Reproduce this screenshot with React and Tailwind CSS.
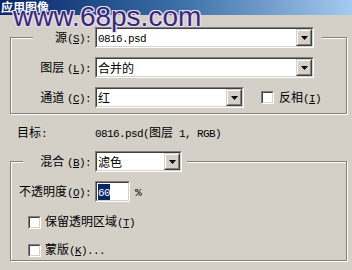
import React from 'react';

// latin text in the old bitmap-dialog look: 6px per char
const M = ({ children }) => (
  <span className="font-['Liberation_Mono',monospace] text-[11px] tracking-[-0.6px]">{children}</span>
);

const Sunken = ({ className = '', children }) => (
  <div className={`border border-t-[#808080] border-l-[#808080] border-b-white border-r-white ${className}`}>
    <div className="w-full h-full bg-white border border-t-[#404040] border-l-[#404040] border-b-[#d4d0c8] border-r-[#d4d0c8] flex items-center">
      {children}
    </div>
  </div>
);

const Arrow = () => (
  <div className="w-[16px] h-full shrink-0 bg-[#d4d0c8] border border-t-[#d4d0c8] border-l-[#d4d0c8] border-b-[#404040] border-r-[#404040]">
    <div className="w-full h-full border border-t-white border-l-white border-b-[#808080] border-r-[#808080] flex items-center justify-center">
      <svg width="7" height="4" viewBox="0 0 7 4"><path d="M0 0h7L3.5 4z" fill="#000" /></svg>
    </div>
  </div>
);

const Select = ({ width, children }) => (
  <Sunken className={`${width} h-[21px] shrink-0`}>
    <div className="flex-1 pl-[1px] leading-[15px] whitespace-nowrap overflow-hidden">{children}</div>
    <Arrow />
  </Sunken>
);

const Check = () => <Sunken className="w-[13px] h-[13px] shrink-0" />;

const Group = ({ className = '', children }) => (
  <div className={`ml-[10px] w-[337px] border border-[#808080] shadow-[inset_1px_1px_0_#fff,1px_1px_0_#fff] flex flex-col ${className}`}>
    {children}
  </div>
);

const Label = ({ width = 'w-[84px]', children }) => (
  <div className={`${width} shrink-0 text-right pr-[4px] leading-[15px] whitespace-nowrap`}>{children}</div>
);

export default function App() {
  return (
    <div className="relative w-[352px] h-[270px] overflow-hidden bg-[#d4d0c8] text-black text-[12px] font-['Noto_Sans_CJK_SC',sans-serif]">
      {/* title bar */}
      <div className="h-[15px] bg-gradient-to-r from-[#0a246a] via-[#3a6ea5] to-[#a6caf0] text-white font-bold leading-[13px] pl-[1px]">
        应用图像
      </div>

      {/* watermark */}
      <div className="absolute left-[13px] top-[3px] z-10 font-['Liberation_Sans',sans-serif] text-[28px] leading-[28px] text-[#3b2a70] [text-shadow:1px_0_0_#e4def4,-1px_0_0_#e4def4,0_1px_0_#e4def4,0_-1px_0_#e4def4,1px_1px_0_#e4def4,-1px_-1px_0_#e4def4,1px_-1px_0_#e4def4,-1px_1px_0_#e4def4]">
        www.68ps.com
      </div>

      {/* source group */}
      <Group className="mt-[22px] h-[77px]">
        <div className="-mt-[11px] ml-[22px] w-[289px] pr-[8px] bg-[#d4d0c8] flex items-center">
          <Label width="w-[62px]">源<M>(<u>S</u>):</M></Label>
          <Select width="w-[219px]"><M>0816.psd</M></Select>
        </div>
        <div className="mt-[9px] flex items-center">
          <Label>图层 <M>(<u>L</u>):</M></Label>
          <Select width="w-[219px]">合并的</Select>
        </div>
        <div className="mt-[9px] flex items-center">
          <Label>通道 <M>(<u>C</u>):</M></Label>
          <Select width="w-[149px]">红</Select>
          <div className="ml-[17px] flex items-center gap-[5px]">
            <Check />
            <span className="leading-[15px]">反相<M>(<u>I</u>)</M></span>
          </div>
        </div>
      </Group>

      {/* target */}
      <div className="mt-[12px] h-[14px] flex items-center pl-[17px] leading-[14px]">
        <div className="w-[78px] shrink-0">目标<M>:</M></div>
        <div className="whitespace-nowrap"><M>0816.psd(</M>图层<M> 1, RGB)</M></div>
      </div>

      {/* blend group */}
      <Group className="mt-[21px] h-[100px]">
        <div className="-mt-[11px] ml-[12px] w-[164px] pr-[5px] bg-[#d4d0c8] flex items-center">
          <Label width="w-[72px]">混合 <M>(<u>B</u>):</M></Label>
          <Select width="w-[87px]">滤色</Select>
        </div>
        <div className="mt-[9px] flex items-center">
          <Label>不透明度<M>(<u>O</u>):</M></Label>
          <Sunken className="w-[35px] h-[21px] shrink-0">
            <span className="ml-[1px] bg-[#0a246a] text-white leading-[13px]"><M>60</M></span>
          </Sunken>
          <span className="ml-[5px]"><M>%</M></span>
        </div>
        <div className="mt-[11px] ml-[17px] flex items-center gap-[4px]">
          <Check />
          <span className="leading-[15px]">保留透明区域<M>(<u>T</u>)</M></span>
        </div>
        <div className="mt-[10px] ml-[17px] flex items-center gap-[4px]">
          <Check />
          <span className="leading-[15px]">蒙版<M>(<u>K</u>)...</M></span>
        </div>
      </Group>
    </div>
  );
}
